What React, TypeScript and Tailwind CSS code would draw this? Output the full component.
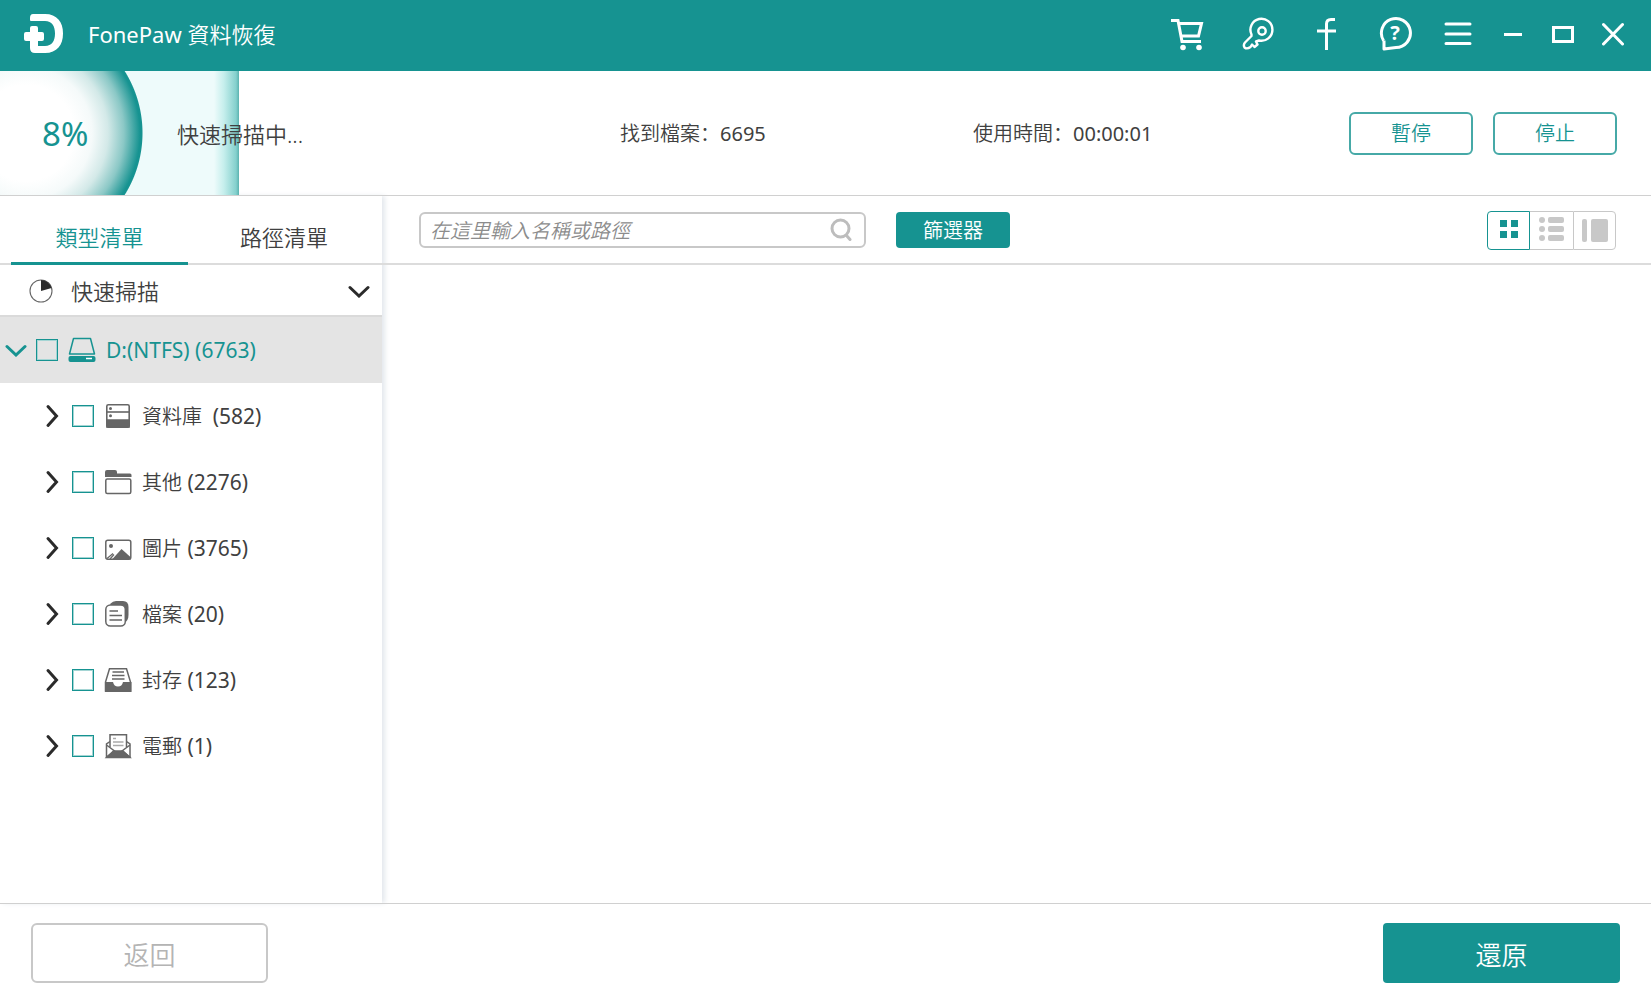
import { useState, type ReactNode } from "react";

const categories = [
  { id: "database", label: "資料庫\u00a0", count: 582, icon: <DatabaseIcon /> },
  { id: "other", label: "其他", count: 2276, icon: <FolderIcon /> },
  { id: "image", label: "圖片", count: 3765, icon: <ImageIcon /> },
  { id: "document", label: "檔案", count: 20, icon: <DocumentIcon /> },
  { id: "archive", label: "封存", count: 123, icon: <ArchiveIcon /> },
  { id: "email", label: "電郵", count: 1, icon: <MailIcon /> },
];

export default function App() {
  return (
    <div className="flex min-h-screen flex-col bg-white font-['Noto_Sans','Noto_Sans_CJK_SC',sans-serif] text-xl leading-7 font-[350] text-[#404040]">
      <TitleBar />
      <ScanStatus />
      <div className="flex flex-1">
        <Sidebar />
        <main className="flex flex-1 flex-col">
          <Toolbar />
        </main>
      </div>
      <footer className="flex justify-between border-t border-[#d0d0d0] px-[31px] pt-[19px] pb-6">
        <button
          disabled
          className="h-[60px] w-[237px] rounded-md border-2 border-[#c8c8c8] pt-1 text-[26px] text-[#b4b4b4]"
        >
          返回
        </button>
        <button className="h-[60px] w-[237px] rounded bg-[#169391] pt-1 text-[26px] text-white">
          還原
        </button>
      </footer>
    </div>
  );
}

function TitleBar() {
  return (
    <header className="flex h-[71px] items-center bg-[#169391] pr-[27px] pb-1 pl-6 text-white">
      <svg width="40" height="40" viewBox="0 0 40 40" fill="currentColor" aria-hidden="true">
        <path d="M9 0H21C33 0 39 8 39 19.500S33 39 21 39H11Q6 39 6 34V27H2Q0 27 0 25V20Q0 18 2 18H6V14Q6 12 8 12H12Q14 12 14 14V18H18Q20 18 20 20V25Q20 27 18 27H14V32H21C28 32 31 27 31 19.500S28 7 21 7H7Q6 7 6 6V4Q6 0 9 0Z" />
      </svg>
      <h1 className="ml-6 flex-1 pt-px text-[22px]">
        <span className="font-normal">FonePaw </span>資料恢復
      </h1>
      <div className="flex items-center gap-8">
        <button aria-label="Buy">
          <svg width="38" height="38" viewBox="0 0 38 38" fill="none" stroke="currentColor" strokeWidth="3">
            <path d="M1 5.500H8L12 26.500H31M8.500 8.500H31.500L28.500 21H10.500" />
            <circle cx="13" cy="32.500" r="2.800" fill="currentColor" stroke="none" />
            <circle cx="29" cy="32.500" r="2.800" fill="currentColor" stroke="none" />
          </svg>
        </button>
        <button aria-label="Register">
          <svg width="36" height="38" viewBox="0 0 36 38" fill="none" stroke="currentColor" strokeWidth="2.400" strokeLinejoin="round">
            <path d="M11.500 19.500A11 11 0 1 1 19 25.500L16 26.500L17.500 29.500L14.500 32L12 29.500L10.500 32Q7 34.500 4.500 32.500Q3 30 5 27.500L11.500 21Z" />
            <circle cx="22" cy="16" r="3.700" />
          </svg>
        </button>
        <button aria-label="Facebook">
          <svg width="36" height="38" viewBox="0 0 36 38" fill="none" stroke="currentColor" strokeWidth="3">
            <path d="M27 4.500H23Q18.500 4.500 18.500 9V35M9 16H28" />
          </svg>
        </button>
        <button aria-label="Help">
          <svg width="36" height="38" viewBox="0 0 36 38" fill="none" stroke="currentColor" strokeWidth="3" strokeLinejoin="round">
            <path d="M7.500 25.500A14.500 14.500 0 1 1 20 32.500L8 34V25.500" />
            <text x="19" y="25" textAnchor="middle" fontSize="20" fontWeight="700" fill="currentColor" stroke="none">?</text>
          </svg>
        </button>
        <button aria-label="Menu">
          <svg width="28" height="38" viewBox="0 0 28 38" fill="none" stroke="currentColor" strokeWidth="3" strokeLinecap="round">
            <path d="M2 9H26M2 19H26M2 28.500H26" />
          </svg>
        </button>
        <button aria-label="Minimize">
          <svg width="18" height="38" viewBox="0 0 18 38" fill="none" stroke="currentColor" strokeWidth="3">
            <path d="M0 19.500H18" />
          </svg>
        </button>
        <button aria-label="Maximize" className="-mr-1">
          <svg width="20" height="38" viewBox="0 0 20 38" fill="none" stroke="currentColor" strokeWidth="3" overflow="visible">
            <rect x="-0.500" y="12.500" width="19" height="14" />
          </svg>
        </button>
        <button aria-label="Close">
          <svg width="22" height="38" viewBox="0 0 22 38" fill="none" stroke="currentColor" strokeWidth="3" strokeLinecap="round">
            <path d="M1.500 9.500L20.500 29M20.500 9.500L1.500 29" />
          </svg>
        </button>
      </div>
    </header>
  );
}

function ScanStatus() {
  return (
    <section className="relative flex h-[125px] items-center border-b border-[#d0d0d0] pr-[34px]">
      {/* Progress fill, dial on top of the bar */}
      <div className="absolute inset-y-0 left-0 w-[239px] bg-[radial-gradient(circle_at_26px_62px,#fff_48px,#f5fafa_66px,#d3e9e8_82px,#8bc8c6_98px,#169391_114px,#169391_116px,transparent_117px),linear-gradient(90deg,#eefbfb_214px,#c5eeec_224px,#84d0cd_236px,#5bb3b0_239px)]" />
      <div className="relative w-[177px] pt-0.5 pl-[42px] text-[33px] font-normal text-[#169391]">8%</div>
      <div className="relative flex-[443] pt-0.5 text-[22px]">快速掃描中...</div>
      <div className="relative flex-[353] pt-0.5">
        找到檔案：<span className="font-normal">6695</span>
      </div>
      <div className="relative flex-[376] pt-0.5">
        使用時間：<span className="font-normal">00:00:01</span>
      </div>
      <div className="relative flex gap-5">
        <button className="h-[43px] w-[124px] rounded-md border-2 border-[#46a9a7] pt-0.5 text-[#169391]">
          暫停
        </button>
        <button className="h-[43px] w-[124px] rounded-md border-2 border-[#46a9a7] pt-0.5 text-[#169391]">
          停止
        </button>
      </div>
    </section>
  );
}

function Sidebar() {
  const [tab, setTab] = useState("type");

  const tabClass = (name: string) =>
    tab === name ? "border-[#169391] text-[#169391]" : "border-transparent";

  return (
    <aside className="w-[382px] shadow-[3px_0_5px_#e4e8ed]">
      <div className="flex h-[69px] border-b-2 border-[#dcdcdc] pl-[11px] text-[22px]">
        <button
          onClick={() => setTab("type")}
          className={`-mb-0.5 w-[177px] border-b-3 pt-4 ${tabClass("type")}`}
        >
          類型清單
        </button>
        <button
          onClick={() => setTab("path")}
          className={`-mb-0.5 flex-1 border-b-3 pt-4 pr-0.5 ${tabClass("path")}`}
        >
          路徑清單
        </button>
      </div>

      <button className="flex h-[52px] w-full items-center border-b-2 border-[#dadada] pt-0.5 pr-3 pl-[29px] text-left text-[22px]">
        <svg width="24" height="24" viewBox="0 0 24 24" aria-hidden="true">
          <circle cx="12" cy="12" r="11" fill="none" stroke="#666" strokeWidth="1.100" />
          <path d="M12 12V1A11 11 0 0 1 22.600 9Z" fill="#2b2b2b" />
        </svg>
        <span className="ml-[18px] flex-1">快速掃描</span>
        <ChevronDown color="#2b2b2b" />
      </button>

      <ul>
        <li className="flex h-[66px] items-center bg-[#e4e4e4] pl-[5px] text-[#169391]">
          <button aria-label="Collapse">
            <ChevronDown color="#169391" />
          </button>
          <TreeCheckbox id="drive" icon={<DriveIcon />}>
            <span className="text-[21px] font-normal">D:(NTFS) (6763)</span>
          </TreeCheckbox>
        </li>
        {categories.map((c) => (
          <li key={c.id} className="flex h-[66px] items-center pl-[41px]">
            <button aria-label="Expand">
              <svg width="22" height="24" viewBox="0 0 22 24" fill="none" stroke="#2b2b2b" strokeWidth="3" strokeLinecap="round">
                <path d="M7 2.500L15.500 12L7 21.500" />
              </svg>
            </button>
            <TreeCheckbox id={c.id} icon={c.icon}>
              {c.label}
              <span className="text-[21px] font-normal"> ({c.count})</span>
            </TreeCheckbox>
          </li>
        ))}
      </ul>
    </aside>
  );
}

function TreeCheckbox({ id, icon, children }: { id: string; icon: ReactNode; children: ReactNode }) {
  return (
    <>
      <input
        id={id}
        type="checkbox"
        className="ml-[9px] size-[22px] appearance-none border border-[#169391] shadow-[inset_0_0_0_1px_#a5d5d4] checked:bg-[#169391]"
      />
      <label htmlFor={id} className="ml-2.5 flex items-center gap-2.5">
        {icon}
        <span className="pt-px">{children}</span>
      </label>
    </>
  );
}

function Toolbar() {
  const [view, setView] = useState("grid");

  const viewClass = (name: string) =>
    view === name ? "border-[#169391] text-[#169391]" : "border-[#c8c8c8] text-[#c8c8c8]";

  return (
    <div className="flex h-[69px] items-center border-b-2 border-[#dcdcdc] pr-[35px] pl-[37px]">
      <div className="flex h-9 w-[447px] items-center rounded-md border-2 border-[#c8c8c8] pr-3 pl-[9px]">
        <input
          type="text"
          aria-label="Search"
          placeholder="在這里輸入名稱或路徑"
          className="min-w-0 flex-1 pt-0.5 italic outline-none placeholder:text-[#8c8c8c]"
        />
        <svg width="22" height="24" viewBox="0 0 22 24" fill="none" stroke="#bdbdbd" strokeWidth="3" strokeLinecap="round">
          <circle cx="10.500" cy="10.500" r="8.500" />
          <path d="M16.500 17.500L20 21.500" />
        </svg>
      </div>
      <button className="ml-[30px] h-9 w-[114px] rounded bg-[#169391] pt-0.5 text-white">篩選器</button>

      <div className="ml-auto flex h-10 pt-px">
        <button
          aria-label="Grid view"
          onClick={() => setView("grid")}
          className={`flex w-[43px] items-center justify-center rounded-l-sm border pb-0.5 ${viewClass("grid")}`}
        >
          <svg width="18" height="18" viewBox="0 0 18 18" fill="currentColor">
            <path d="M0 0H7V7H0ZM11 0H18V7H11ZM0 11H7V18H0ZM11 11H18V18H11Z" />
          </svg>
        </button>
        <button
          aria-label="List view"
          onClick={() => setView("list")}
          className={`flex w-[43px] items-center justify-center border-y pb-0.5 ${viewClass("list")}`}
        >
          <svg width="26" height="24" viewBox="0 0 26 24" fill="currentColor">
            <circle cx="3" cy="3" r="3" />
            <circle cx="3" cy="12" r="3" />
            <circle cx="3" cy="21" r="3" />
            <rect x="9" y="0" width="16" height="6" rx="2" />
            <rect x="9" y="9" width="16" height="6" rx="2" />
            <rect x="9" y="18" width="16" height="6" rx="2" />
          </svg>
        </button>
        <button
          aria-label="Detail view"
          onClick={() => setView("detail")}
          className={`flex w-[43px] items-center justify-center rounded-r-sm border ${viewClass("detail")}`}
        >
          <svg width="26" height="24" viewBox="0 0 26 24" fill="currentColor">
            <rect x="0" y="1" width="5" height="23" rx="2" />
            <rect x="9" y="1" width="17" height="23" rx="2" />
          </svg>
        </button>
      </div>
    </div>
  );
}

function ChevronDown({ color }: { color: string }) {
  return (
    <svg width="22" height="14" viewBox="0 0 22 14" fill="none" stroke={color} strokeWidth="3" strokeLinecap="round">
      <path d="M2 3.500L11 12L20 3.500" />
    </svg>
  );
}

function DriveIcon() {
  return (
    <svg width="28" height="26" viewBox="0 0 28 26" fill="none" stroke="#169391" strokeWidth="1.500">
      <path d="M5.500 1.500H22.500L26.500 17H1.500Z" strokeLinejoin="round" />
      <rect x="0.500" y="19" width="27" height="6" rx="2" fill="#169391" stroke="none" />
      <path d="M18 21.500H24" stroke="#fff" />
    </svg>
  );
}

function DatabaseIcon() {
  return (
    <svg width="28" height="26" viewBox="0 0 28 26" fill="none" stroke="#666" strokeWidth="1.600">
      <rect x="2.800" y="1.800" width="22.400" height="22.400" rx="1.500" />
      <path d="M3 9H25" />
      <path d="M3 17H25V24H3Z" fill="#666" />
      <circle cx="6.500" cy="5.500" r="1.500" fill="#666" stroke="none" />
      <circle cx="6.500" cy="12.800" r="1.500" fill="#666" stroke="none" />
    </svg>
  );
}

function FolderIcon() {
  return (
    <svg width="28" height="26" viewBox="0 0 28 26">
      <path d="M1 8V3Q1 1 3 1H11Q13 1 13 3V4.500H26Q27.500 4.500 27.500 6V8Z" fill="#666" />
      <rect x="1.800" y="10" width="25" height="14.500" rx="1.500" fill="none" stroke="#666" strokeWidth="1.500" />
    </svg>
  );
}

function ImageIcon() {
  return (
    <svg width="28" height="26" viewBox="0 0 28 26">
      <rect x="1.800" y="5.300" width="25" height="19" rx="2" fill="none" stroke="#666" strokeWidth="1.500" />
      <circle cx="7" cy="11" r="2" fill="#666" />
      <path d="M8 24.500L17.500 14L27 22.500V24.500Z" fill="#666" />
      <path d="M3 23.500L9 18.500M6 24L10 19.500" stroke="#666" strokeWidth="1.200" />
    </svg>
  );
}

function DocumentIcon() {
  return (
    <svg width="28" height="28" viewBox="0 0 28 28">
      <path d="M6 4Q9 1 12 1H19Q24.500 1 24.500 7V15Q24.500 21 20 23Z" fill="#666" />
      <rect x="1.800" y="5" width="19.500" height="21" rx="4.500" fill="#fff" stroke="#666" strokeWidth="1.500" />
      <path d="M5.500 11H14M5.500 15.500H18M5.500 20H18" stroke="#666" strokeWidth="1.500" />
    </svg>
  );
}

function ArchiveIcon() {
  return (
    <svg width="28" height="26" viewBox="0 0 28 26">
      <path d="M5.500 1.800H22.500L26.500 15V24H1.500V15Z" fill="none" stroke="#666" strokeWidth="1.500" />
      <path d="M1 15H9Q10 19.500 14 19.500T19 15H27.500V25H1Z" fill="#666" />
      <path d="M8.500 5H20M8 8.500H20.500M8 12H20.500" stroke="#666" strokeWidth="1.500" />
    </svg>
  );
}

function MailIcon() {
  return (
    <svg width="28" height="26" viewBox="0 0 28 26" fill="none" stroke="#666" strokeWidth="1.500">
      <path d="M6 8.500L2.500 11V24.300H26V11L22.500 8.500" />
      <path d="M6 14V1.800H22.500V14" />
      <path d="M2.500 12L10.500 18L2.500 24M26 12L18 18L26 24" />
      <path d="M2.500 24.500L9.500 18H19L26 24.500Z" fill="#666" />
      <path d="M9 5.500H12M9 9H19.500M9 12.500H19.500" stroke="#aaa" strokeWidth="1.300" />
    </svg>
  );
}
